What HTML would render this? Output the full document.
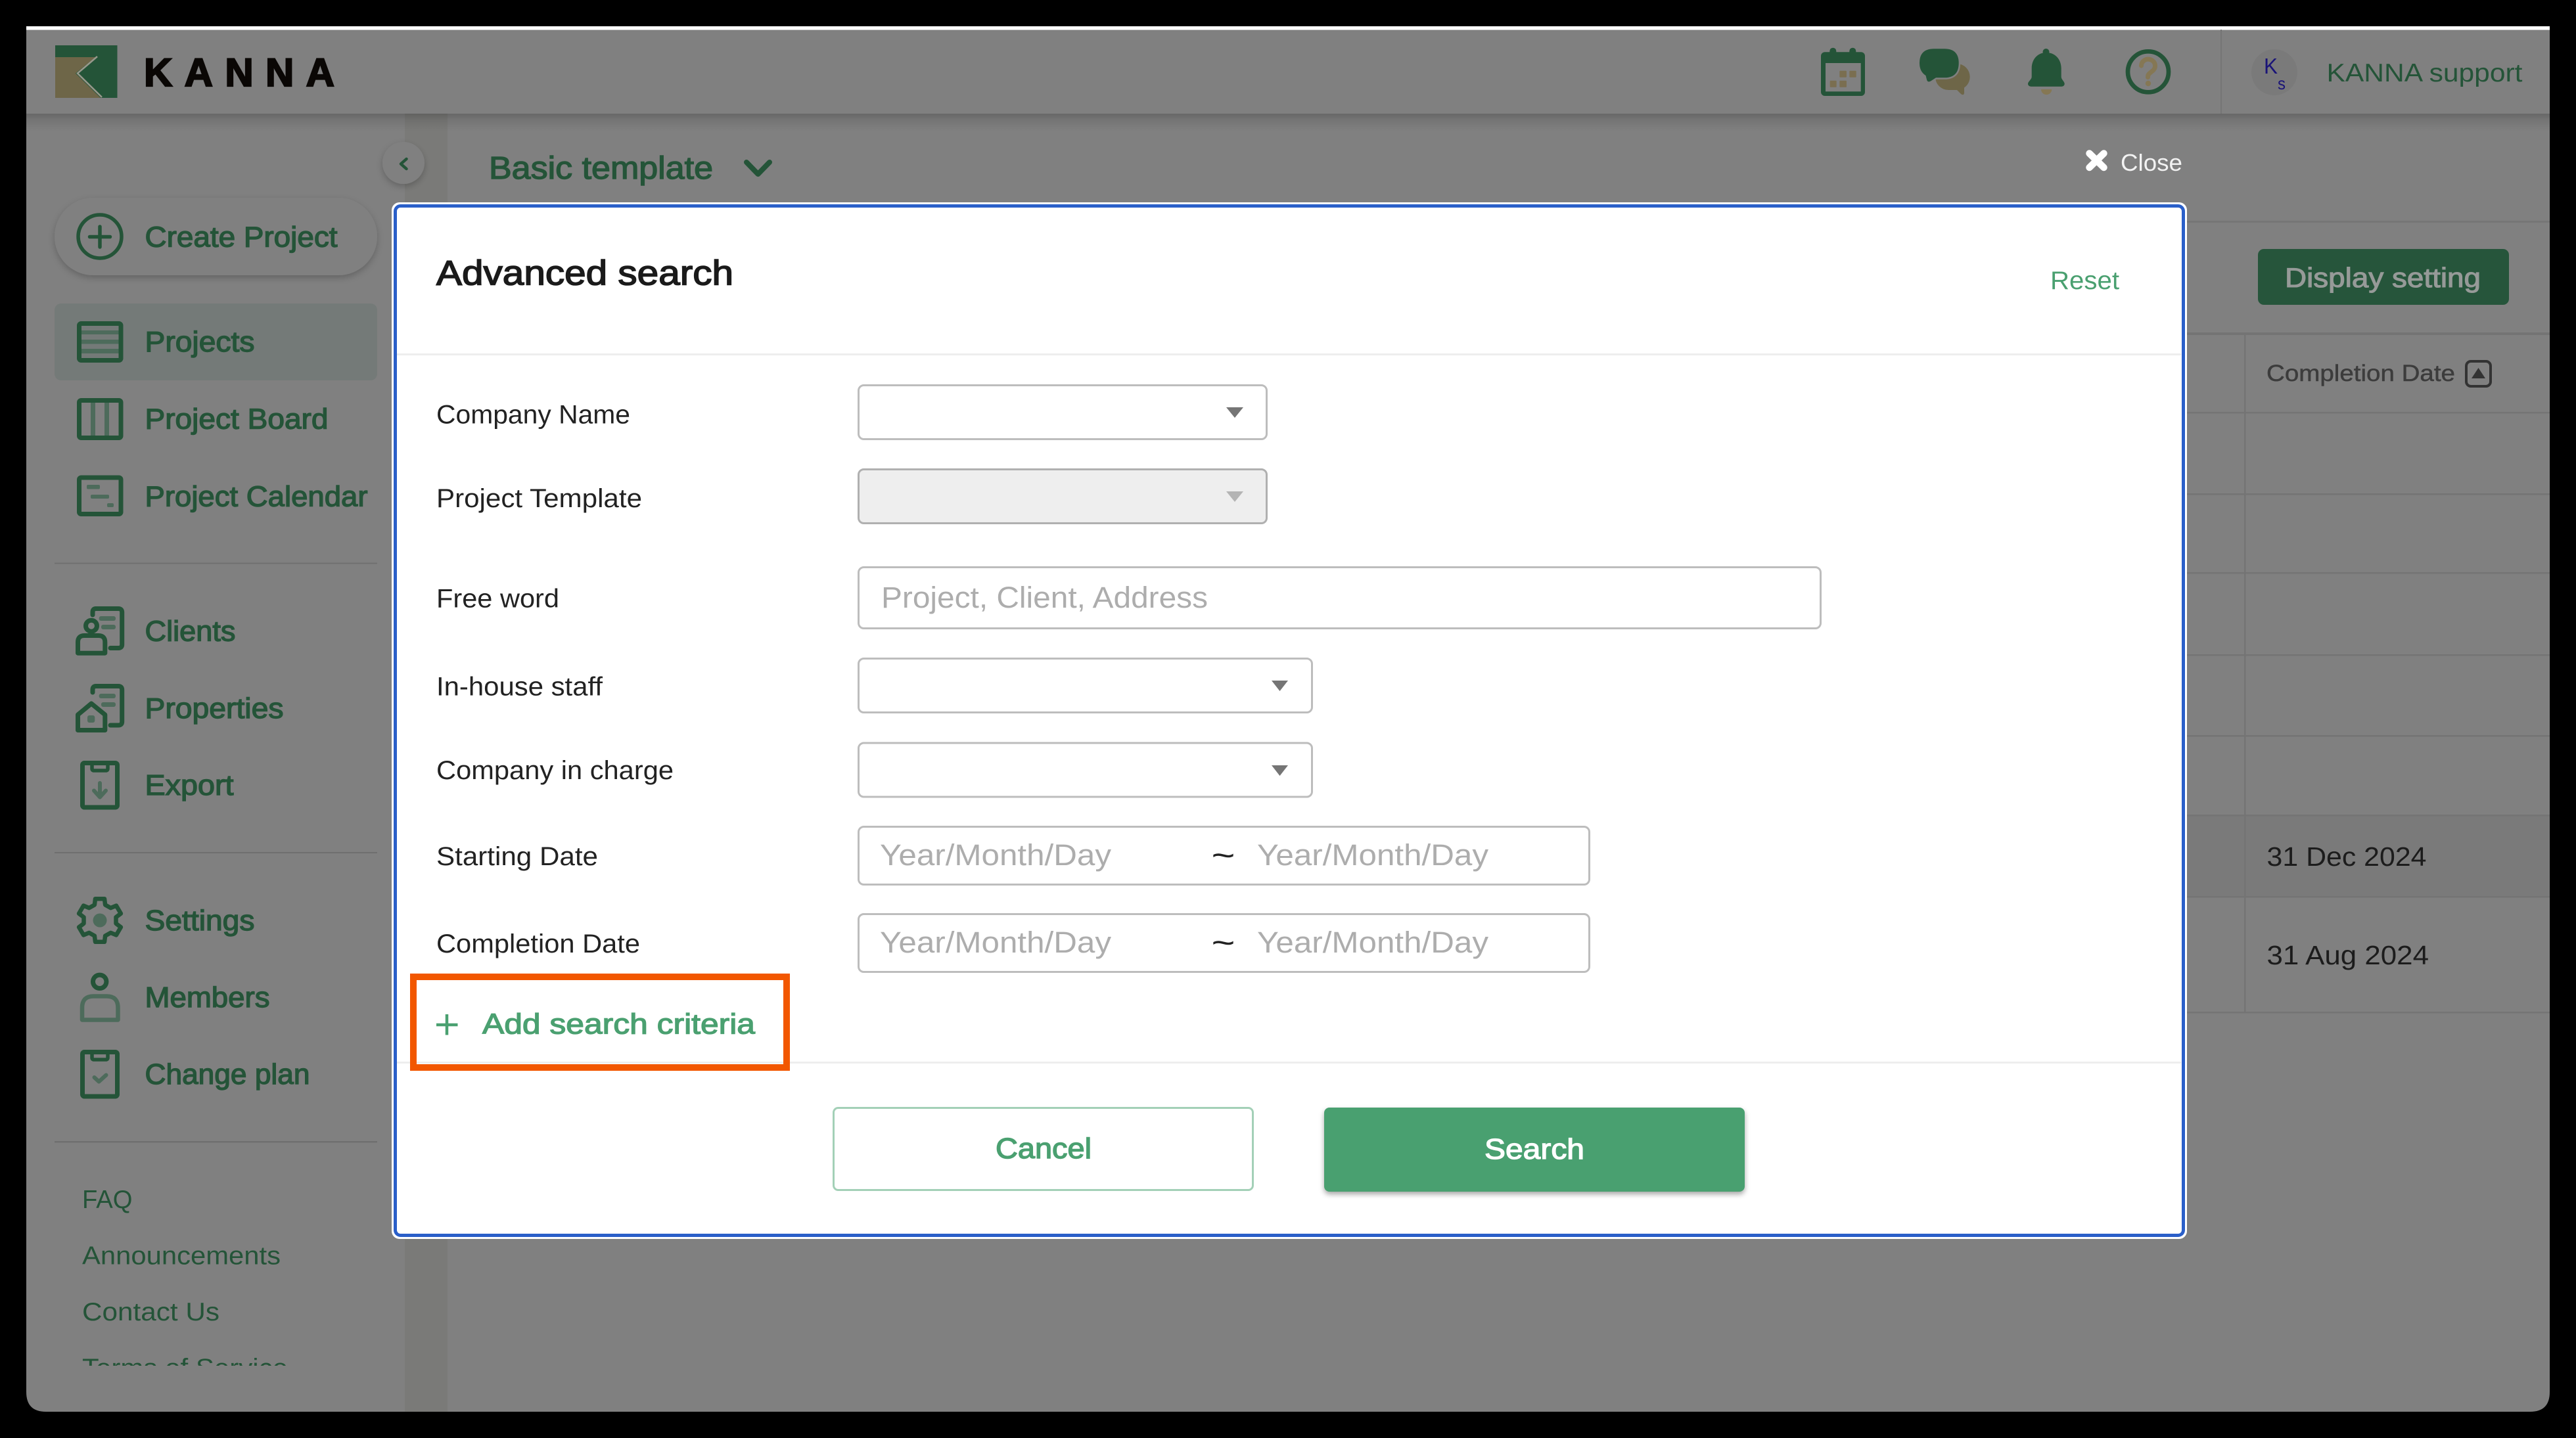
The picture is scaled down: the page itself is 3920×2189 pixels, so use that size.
<!DOCTYPE html>
<html lang="en">
<head>
<meta charset="utf-8">
<title>KANNA - Advanced search</title>
<style>
html,body{margin:0;padding:0;background:#000;width:3920px;height:2189px;overflow:hidden}
svg{display:block}
text{font-family:"Liberation Sans",Arial,sans-serif;white-space:pre}
.nav{font-size:44px;fill:#245438;stroke:#245438;stroke-width:1.4}
.link{font-size:39px;fill:#245438}
.lab{font-size:40px;fill:#222}
.ph{font-size:45px;fill:#adadad}
.cell{font-size:41px;fill:#1c1c1c}
.ic{fill:none;stroke:#245438;stroke-width:7;stroke-linecap:round;stroke-linejoin:round}
.ic2{fill:none;stroke:#4d6b5b;stroke-width:6;stroke-linecap:round;stroke-linejoin:round}
.lt{fill:#4d6b5b}
.tan{fill:#7a6e50}
.box{fill:#fff;stroke:#bdbdbd;stroke-width:3}
</style>
</head>
<body>
<svg xmlns="http://www.w3.org/2000/svg" width="3920" height="2189" viewBox="0 0 3920 2189">
<defs>
<linearGradient id="hs" x1="0" y1="0" x2="0" y2="1"><stop offset="0" stop-color="#000" stop-opacity=".2"/><stop offset=".35" stop-color="#000" stop-opacity=".09"/><stop offset="1" stop-color="#000" stop-opacity="0"/></linearGradient>
<filter id="sh" x="-20%" y="-30%" width="140%" height="170%"><feDropShadow dx="0" dy="4" stdDeviation="5" flood-color="#000" flood-opacity=".22"/></filter>
<filter id="sh2" x="-20%" y="-20%" width="140%" height="150%"><feDropShadow dx="0" dy="4" stdDeviation="4" flood-color="#000" flood-opacity=".35"/></filter>
<clipPath id="navclip"><rect x="83" y="1700" width="500" height="379"/></clipPath>
</defs>

<rect width="3920" height="2189" fill="#000"/>
<!-- window -->
<path d="M40 40H3880V2119Q3880 2149 3850 2149H70Q40 2149 40 2119Z" fill="#808080"/>
<rect x="40" y="40" width="3840" height="5.5" fill="#fff"/>
<!-- gutter -->
<rect x="616" y="173" width="65" height="1976" fill="#7a7a78"/>
<!-- content lines -->
<rect x="681" y="336" width="3199" height="3" fill="#767676"/>
<rect x="681" y="506" width="3199" height="4" fill="#747474"/>
<rect x="681" y="1241" width="3199" height="124" fill="#7a7a7a"/>
<g fill="#747474">
<rect x="681" y="627" width="3199" height="2.5"/>
<rect x="681" y="751" width="3199" height="2.5"/>
<rect x="681" y="871" width="3199" height="2.5"/>
<rect x="681" y="996" width="3199" height="2.5"/>
<rect x="681" y="1119" width="3199" height="2.5"/>
<rect x="681" y="1240" width="3199" height="2.5"/>
<rect x="681" y="1364" width="3199" height="2.5"/>
<rect x="681" y="1540" width="3199" height="2.5"/>
<rect x="3415" y="508" width="2.5" height="1033"/>
</g>
<text x="744" y="272" font-size="48" fill="#245438" stroke="#245438" stroke-width="1.4" textLength="341" lengthAdjust="spacingAndGlyphs">Basic template</text>
<path d="M1136 247L1153.500 265L1171 247" fill="none" stroke="#245438" stroke-width="8" stroke-linecap="round" stroke-linejoin="round"/>
<rect x="3436" y="379" width="382" height="85" rx="9" fill="#26553b"/>
<text x="3477" y="437" font-size="42" fill="#969a98" stroke="#969a98" stroke-width="1.1" textLength="298" lengthAdjust="spacingAndGlyphs">Display setting</text>
<text x="3449" y="580" font-size="35" fill="#3c3c3c" stroke="#3c3c3c" stroke-width=".5" textLength="287" lengthAdjust="spacingAndGlyphs">Completion Date</text>
<rect x="3753" y="550" width="37" height="38" rx="7" fill="none" stroke="#333" stroke-width="4"/>
<path d="M3771.500 560L3782 576H3761Z" fill="#333"/>
<text class="cell" x="3449.500" y="1318" textLength="243" lengthAdjust="spacingAndGlyphs">31 Dec 2024</text>
<text class="cell" x="3449.500" y="1468" textLength="246.500" lengthAdjust="spacingAndGlyphs">31 Aug 2024</text>

<!-- header -->
<rect x="40" y="173" width="3840" height="27" fill="url(#hs)"/>
<rect x="3379" y="45" width="2" height="128" fill="#757575"/>
<!-- logo -->
<rect x="84" y="69" width="94.500" height="80" fill="#245438"/>
<path d="M84 87H145L115 111.600L153 149H84Z" fill="#6e6648"/>
<path d="M148 86L118 111.600L155 148" fill="none" stroke="#98988c" stroke-width="2.500"/>
<text x="219" y="131" font-size="60" font-weight="700" fill="#0a0705" stroke="#0a0705" stroke-width="2.200" textLength="290">KANNA</text>
<!-- calendar -->
<rect x="2771" y="79.300" width="67" height="66.700" rx="6" fill="#245438"/>
<rect x="2784.300" y="72.700" width="10" height="14" rx="5" fill="#245438"/>
<rect x="2814.300" y="72.700" width="10" height="14" rx="5" fill="#245438"/>
<rect x="2778" y="96" width="53.700" height="43.300" fill="#808080"/>
<rect class="tan" x="2799.300" y="107.700" width="10.700" height="10" rx="1"/>
<rect class="tan" x="2814.300" y="107.700" width="10.400" height="10" rx="1"/>
<rect class="tan" x="2784.700" y="122.700" width="10" height="10" rx="1"/>
<rect class="tan" x="2799.300" y="122.700" width="10.700" height="10" rx="1"/>
<!-- chat -->
<rect x="2945" y="97" width="52.700" height="40" rx="20" fill="#6e6648"/>
<path d="M2975 134L2984 143Q2988 146 2989 142L2989 130Z" fill="#6e6648"/>
<path d="M2943 74.300H2959Q2980.700 74.300 2980.700 96Q2980.700 118.300 2959 118.300H2946L2938 123.500Q2933 126 2932 121L2930.500 115Q2921 109 2921 96Q2921 74.300 2943 74.300Z" fill="#245438" stroke="#808080" stroke-width="5" paint-order="stroke"/>
<!-- bell -->
<circle cx="3113.500" cy="79" r="5" fill="#245438"/>
<path d="M3114 80C3127 80 3136.700 90 3136.700 104V117C3136.700 121 3141.700 124 3141.700 127.500C3141.700 130 3140 131.700 3137 131.700H3091C3088 131.700 3086 130 3086 127.500C3086 124 3091.700 121 3091.700 117V104C3091.700 90 3101 80 3114 80Z" fill="#245438"/>
<path d="M3106 136H3122.300A8.150 8.150 0 0 1 3106 136Z" fill="#857754"/>
<!-- help -->
<circle cx="3269" cy="109.300" r="31" fill="none" stroke="#245438" stroke-width="6.700"/>
<path d="M3258.500 100A10.500 10 0 1 1 3275.500 108C3270.500 112 3268.500 113 3268.500 117.500" fill="none" stroke="#857754" stroke-width="7" stroke-linecap="round"/>
<circle cx="3269" cy="127" r="4.200" fill="#857754"/>
<!-- avatar -->
<circle cx="3461" cy="110" r="35" fill="#7a7a7a"/>
<text x="3445" y="112" font-size="33" fill="#1a1478" textLength="21" lengthAdjust="spacingAndGlyphs">K</text>
<text x="3466" y="136" font-size="26" fill="#1a1478" textLength="12" lengthAdjust="spacingAndGlyphs">s</text>
<text x="3540.500" y="124" font-size="39" fill="#245438" textLength="298" lengthAdjust="spacingAndGlyphs">KANNA support</text>
<!-- close -->
<path d="M3179.500 233.500L3201.500 255M3201.500 233.500L3179.500 255" stroke="#fff" stroke-width="10.500" stroke-linecap="round" fill="none"/>
<text x="3227" y="260" font-size="36" fill="#f2f2f2" textLength="94" lengthAdjust="spacingAndGlyphs">Close</text>

<!-- collapse button -->
<circle cx="614" cy="248" r="32" fill="#808080" filter="url(#sh)"/>
<path d="M618.500 242L610 249.500L618.500 257" fill="none" stroke="#245438" stroke-width="4.500" stroke-linecap="round" stroke-linejoin="round"/>

<!-- sidebar -->
<rect x="83" y="301" width="491" height="118" rx="59" fill="#808080" filter="url(#sh)"/>
<circle cx="152" cy="360" r="33" fill="none" stroke="#245438" stroke-width="5.500"/>
<path d="M136.500 360.500H167.500M152 345V376" stroke="#245438" stroke-width="5.500" stroke-linecap="round" fill="none"/>
<text class="nav" x="220.500" y="375.500" textLength="293" lengthAdjust="spacingAndGlyphs">Create Project</text>

<rect x="83" y="462" width="491" height="117" rx="10" fill="#747a78"/>
<g class="lt">
<rect x="124" y="503" width="57" height="6"/>
<rect x="124" y="517" width="57" height="6.500"/>
<rect x="124" y="531" width="57" height="7"/>
</g>
<rect class="ic" x="120.500" y="492.500" width="63.500" height="56" rx="3"/>
<text class="nav" x="220.500" y="535" textLength="167" lengthAdjust="spacingAndGlyphs">Projects</text>

<rect class="lt" x="138" y="610" width="7" height="56"/>
<rect class="lt" x="159" y="610" width="7" height="56"/>
<rect class="ic" x="120.500" y="609.500" width="63.500" height="57" rx="3"/>
<text class="nav" x="220.500" y="652.500" textLength="279" lengthAdjust="spacingAndGlyphs">Project Board</text>

<rect class="ic" x="120.500" y="727" width="63.500" height="55.500" rx="3"/>
<rect class="lt" x="132" y="738" width="20" height="6.500" rx="2"/>
<rect class="lt" x="138" y="753" width="28" height="6" rx="2"/>
<rect class="lt" x="163" y="766" width="10" height="6" rx="2"/>
<text class="nav" x="220.500" y="770.500" textLength="339" lengthAdjust="spacingAndGlyphs">Project Calendar</text>

<rect x="83" y="856.500" width="491" height="2" fill="#6f6f6f"/>

<!-- clients -->
<path class="ic" d="M141 936V932Q141 926.500 146 926.500H180Q185.700 926.500 185.700 932V981Q185.700 986.500 180 986.500H168"/>
<rect class="lt" x="150.700" y="938" width="25.300" height="7" rx="3"/>
<rect class="lt" x="154" y="951" width="22" height="7" rx="3"/>
<circle class="ic" cx="139" cy="952.700" r="8.500"/>
<path class="ic" d="M118.500 994.200V977.500Q118.500 967.500 128.500 967.500H149.800Q159.800 967.500 159.800 977.500V994.200Z"/>
<text class="nav" x="220.500" y="975.500" textLength="138" lengthAdjust="spacingAndGlyphs">Clients</text>

<!-- properties -->
<path class="ic" d="M141 1054V1050Q141 1044.500 146 1044.500H180Q185.700 1044.500 185.700 1050V1098.500Q185.700 1104 180 1104H168"/>
<rect class="lt" x="150.700" y="1056" width="25.300" height="7" rx="3"/>
<rect class="lt" x="154" y="1069" width="22" height="7" rx="3"/>
<path class="ic" d="M118.500 1111.500V1088L139 1071L159.800 1088V1111.500Z"/>
<rect class="lt" x="133" y="1089" width="11.300" height="11" rx="3"/>
<text class="nav" x="220.500" y="1093" textLength="211" lengthAdjust="spacingAndGlyphs">Properties</text>

<!-- export -->
<rect class="ic" x="125.500" y="1161.500" width="53" height="67.500" rx="3"/>
<path d="M140 1162V1170Q140 1173 143 1173H161Q164 1173 164 1170V1162" fill="none" stroke="#245438" stroke-width="5.500"/>
<path class="ic2" d="M152 1192V1213M143 1203.500L152 1213.500L161 1203.500"/>
<text class="nav" x="220.500" y="1210" textLength="135" lengthAdjust="spacingAndGlyphs">Export</text>

<rect x="83" y="1297" width="491" height="2" fill="#6f6f6f"/>

<!-- settings -->
<g transform="translate(152 1401)">
<path d="M-8.100 -23.600L-7 -32.800L7 -32.800L8.100 -23.600L16.400 -18.900L24.900 -22.400L31.900 -10.400L24.500 -4.800L24.500 4.800L31.900 10.400L24.900 22.400L16.400 18.900L8.100 23.600L7 32.800L-7 32.800L-8.100 23.600L-16.400 18.900L-24.900 22.400L-31.900 10.400L-24.500 4.800L-24.500 -4.800L-31.900 -10.400L-24.900 -22.400L-16.400 -18.900Z" fill="none" stroke="#245438" stroke-width="6.500" stroke-linejoin="round"/>
<circle r="10.500" fill="#4d6b5b"/>
</g>
<text class="nav" x="220.500" y="1416" textLength="167" lengthAdjust="spacingAndGlyphs">Settings</text>

<!-- members -->
<circle class="ic" cx="151.700" cy="1494.300" r="10.200"/>
<path d="M125 1552.500V1534Q125 1516.500 142 1516.500H162.500Q179.500 1516.500 179.500 1534V1552.500Z" fill="none" stroke="#4d6b5b" stroke-width="6.500" stroke-linejoin="round"/>
<text class="nav" x="220.500" y="1533" textLength="190" lengthAdjust="spacingAndGlyphs">Members</text>

<!-- change plan -->
<rect class="ic" x="125.500" y="1601.500" width="53" height="67.500" rx="3"/>
<path d="M140 1602V1610Q140 1613 143 1613H161Q164 1613 164 1610V1602" fill="none" stroke="#245438" stroke-width="5.500"/>
<path class="ic2" d="M143.500 1640L150.500 1646.500L161.500 1636.500"/>
<text class="nav" x="220.500" y="1650" textLength="251" lengthAdjust="spacingAndGlyphs">Change plan</text>

<rect x="83" y="1737" width="491" height="2.500" fill="#6f6f6f"/>
<g clip-path="url(#navclip)">
<text class="link" x="125" y="1839" textLength="76.500" lengthAdjust="spacingAndGlyphs">FAQ</text>
<text class="link" x="125" y="1924.500" textLength="302" lengthAdjust="spacingAndGlyphs">Announcements</text>
<text class="link" x="125" y="2010" textLength="209" lengthAdjust="spacingAndGlyphs">Contact Us</text>
<text class="link" x="125" y="2095.500" textLength="313" lengthAdjust="spacingAndGlyphs">Terms of Service</text>
</g>

<!-- modal -->
<rect x="596" y="308" width="2732" height="1578" rx="12" fill="#fff"/>
<rect x="601.500" y="313.500" width="2721" height="1567" rx="8" fill="#fff" stroke="#2a5fc9" stroke-width="5"/>
<text x="664" y="433.500" font-size="53" fill="#1a1a1a" stroke="#1a1a1a" stroke-width="1.600" textLength="452" lengthAdjust="spacingAndGlyphs">Advanced search</text>
<text x="3120" y="440" font-size="39" fill="#4aa070" textLength="105" lengthAdjust="spacingAndGlyphs">Reset</text>
<rect x="604" y="538" width="2715" height="3" fill="#eeeeee"/>

<text class="lab" x="664" y="644.500" textLength="295" lengthAdjust="spacingAndGlyphs">Company Name</text>
<rect class="box" x="1306.500" y="586.500" width="621" height="82" rx="8"/>
<path d="M1866 620H1892L1879 636Z" fill="#757575"/>

<text class="lab" x="664" y="772" textLength="313" lengthAdjust="spacingAndGlyphs">Project Template</text>
<rect x="1306.500" y="714.500" width="621" height="82" rx="8" fill="#eeeeee" stroke="#b0b0b0" stroke-width="3"/>
<path d="M1866 748H1892L1879 764Z" fill="#b4b4b4"/>

<text class="lab" x="664" y="924.500" textLength="187" lengthAdjust="spacingAndGlyphs">Free word</text>
<rect class="box" x="1306.500" y="863.500" width="1464" height="93" rx="8"/>
<text class="ph" x="1341" y="925" textLength="497" lengthAdjust="spacingAndGlyphs">Project, Client, Address</text>

<text class="lab" x="664" y="1058.500" textLength="253" lengthAdjust="spacingAndGlyphs">In-house staff</text>
<rect class="box" x="1306.500" y="1002.500" width="690" height="82" rx="8"/>
<path d="M1935 1036H1960L1947.500 1052Z" fill="#757575"/>

<text class="lab" x="664" y="1186" textLength="361" lengthAdjust="spacingAndGlyphs">Company in charge</text>
<rect class="box" x="1306.500" y="1131" width="690" height="82" rx="8"/>
<path d="M1935 1165H1960L1947.500 1181Z" fill="#757575"/>

<text class="lab" x="664" y="1317" textLength="246" lengthAdjust="spacingAndGlyphs">Starting Date</text>
<rect class="box" x="1306.500" y="1258.500" width="1112" height="88" rx="8"/>
<text class="ph" x="1339" y="1317" textLength="352" lengthAdjust="spacingAndGlyphs">Year/Month/Day</text>
<text x="1844" y="1317" font-size="44" fill="#222" stroke="#222" stroke-width=".5" textLength="35" lengthAdjust="spacingAndGlyphs">~</text>
<text class="ph" x="1913" y="1317" textLength="352" lengthAdjust="spacingAndGlyphs">Year/Month/Day</text>

<text class="lab" x="664" y="1450" textLength="310" lengthAdjust="spacingAndGlyphs">Completion Date</text>
<rect class="box" x="1306.500" y="1391.500" width="1112" height="88" rx="8"/>
<text class="ph" x="1339" y="1450" textLength="352" lengthAdjust="spacingAndGlyphs">Year/Month/Day</text>
<text x="1844" y="1450" font-size="44" fill="#222" stroke="#222" stroke-width=".5" textLength="35" lengthAdjust="spacingAndGlyphs">~</text>
<text class="ph" x="1913" y="1450" textLength="352" lengthAdjust="spacingAndGlyphs">Year/Month/Day</text>

<rect x="604" y="1616" width="2715" height="3" fill="#eeeeee"/>

<rect x="629" y="1487" width="568" height="138" fill="none" stroke="#f25700" stroke-width="10"/>
<path d="M664 1560H696.500M680 1544V1575.500" stroke="#4aa070" stroke-width="4.500" fill="none"/>
<text x="734" y="1573.500" font-size="44" fill="#4aa070" stroke="#4aa070" stroke-width="1.300" textLength="415" lengthAdjust="spacingAndGlyphs">Add search criteria</text>

<rect x="1268.500" y="1686.500" width="638" height="125" rx="7" fill="#fff" stroke="#a3d0b7" stroke-width="3"/>
<text x="1515" y="1763" font-size="44" fill="#4aa070" stroke="#4aa070" stroke-width="1.400" textLength="146" lengthAdjust="spacingAndGlyphs">Cancel</text>

<rect x="2015" y="1686" width="640" height="128" rx="8" fill="#4aa070" filter="url(#sh2)"/>
<text x="2259" y="1764" font-size="44" fill="#fff" stroke="#fff" stroke-width="1.300" textLength="152" lengthAdjust="spacingAndGlyphs">Search</text>
</svg>
</body>
</html>
